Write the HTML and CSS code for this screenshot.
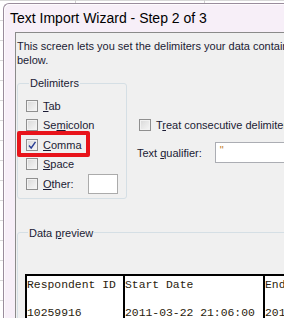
FILE: index.html
```html
<!DOCTYPE html>
<html lang="en">
<head>
  <meta charset="UTF-8" />
  <title>Text Import Wizard - Step 2 of 3</title>
  <link rel="stylesheet" href="styles.css">
</head>
<body>
  <div class="window">
    <div class="titlebar">Text Import Wizard - Step 2 of 3</div>
    <div class="frame">
      <div class="client">
        <p class="intro">This screen lets you set the delimiters your data contains. You can see how your text is affected in the preview<br>below.</p>

        <div class="options">
          <fieldset class="delims">
            <legend>Delimiters</legend>
            <label class="check"><span class="box"></span><span><u>T</u>ab</span></label>
            <label class="check"><span class="box"></span><span>Se<u>m</u>icolon</span></label>
            <label class="check highlight">
              <span class="box"><svg viewBox="0 0 10 10" width="10" height="10"><path d="M2 5.5 L4.2 8 L8.5 1.8" fill="none" stroke="#2b3f95" stroke-width="1.4"/></svg></span>
              <span><u>C</u>omma</span>
            </label>
            <label class="check"><span class="box"></span><span><u>S</u>pace</span></label>
            <label class="check other-row"><span class="box"></span><span><u>O</u>ther:</span><span class="other"></span></label>
          </fieldset>

          <div class="side">
            <label class="check"><span class="box"></span><span>T<u>r</u>eat consecutive delimiters as one</span></label>
            <div class="qualifier">
              <span>Text <u>q</u>ualifier:</span>
              <span class="combo">"</span>
            </div>
          </div>
        </div>

        <fieldset class="preview">
          <legend>Data <u>p</u>review</legend>
          <div class="grid">
            <div class="col c1"><div>Respondent ID</div><div>10259916</div></div>
            <div class="col c2"><div>Start Date</div><div>2011-03-22 21:06:00</div></div>
            <div class="col c3"><div>End Date</div><div>2011-03-22</div></div>
          </div>
        </fieldset>
      </div>
    </div>
  </div>
</body>
</html>
```

FILE: styles.css
```css
body {
  margin: 0;
  width: 284px;
  height: 318px;
  overflow: hidden;
  background-color: #fff;
  background-image:
    linear-gradient(to right, #d0d0d0 1px, transparent 1px),
    linear-gradient(to bottom, #d8d8d8 1px, transparent 1px);
  background-size: 129px 20px;
  background-position: 75px 0;
  font-family: "Liberation Sans", Arial, sans-serif;
  font-size: 11px;
  color: #1b1b34;
}
.window {
  margin: 3px 0 0 3px;
  height: 340px;
  border: 1px solid #9a8c9c;
  border-right: none;
  border-radius: 6px 0 0 0;
  background: #f7eff8;
  box-shadow: inset 1px 1px 0 #fdfbfd;
}
.titlebar {
  height: 28px;
  padding-left: 6px;
  line-height: 28px;
  font-size: 14px;
  color: #000;
}
.frame {
  padding-left: 11px;
}
.client {
  height: 320px;
  background: #f0f0f0;
  border-top: 1px solid #8a8a8a;
  border-left: 1px solid #8a8a8a;
  padding: 6px 0 0 1px;
  overflow: hidden;
}
.intro {
  margin: 0;
  line-height: 14px;
  white-space: nowrap;
}
.options {
  display: flex;
  margin-top: 9px;
}
fieldset {
  margin: 0;
  border: 1px solid #d5dfe5;
  border-radius: 3px;
  padding: 0;
}
legend {
  padding: 0 1px;
  margin-left: 3px;
  line-height: 14px;
}
.delims {
  box-sizing: border-box;
  width: 110px;
  flex: none;
  padding: 9px 0 4px 8px;
  display: flex;
  flex-direction: column;
  gap: 6.5px;
}
.check {
  display: flex;
  align-items: center;
  gap: 5px;
  height: 13px;
  white-space: nowrap;
}
.box {
  box-sizing: border-box;
  width: 12px;
  height: 12px;
  border: 1px solid #8f8f8f;
  background: linear-gradient(135deg, #d8d8d8, #f7f7f7);
  box-shadow: inset 0 0 0 1px #f2f2f2;
  flex: none;
}
.box svg {
  display: block;
}
.highlight {
  position: relative;
}
.highlight::after {
  content: "";
  position: absolute;
  left: -9px;
  top: -7px;
  width: 65px;
  height: 18px;
  border: 4px solid #e8141b;
  border-radius: 2px;
}
.other-row {
  height: 20px;
  margin-top: -3.5px;
}
.other {
  box-sizing: border-box;
  width: 30px;
  height: 20px;
  border: 1px solid #ababab;
  background: #fff;
  margin-left: 9px;
}
.side {
  margin-left: 12px;
  padding-top: 42px;
}
.qualifier {
  display: flex;
  align-items: center;
  margin-top: 11px;
  margin-left: -2px;
}
.combo {
  box-sizing: border-box;
  margin-left: 13px;
  width: 90px;
  height: 21px;
  border: 1px solid #abadb3;
  background: #fff;
  padding: 1px 0 0 4px;
  line-height: 12px;
  color: #c07d2b;
}
.preview {
  margin-top: 27px;
  width: 320px;
  height: 100px;
  padding: 34px 0 0 7px;
}
.grid {
  display: flex;
  background: #fff;
  border-top: 2px solid #000;
  border-left: 2px solid #000;
  font-family: "Liberation Mono", "Courier New", monospace;
  font-size: 11.4px;
  line-height: 14px;
  color: #2b1d0e;
  height: 60px;
}
.col {
  box-sizing: border-box;
  border-right: 2px solid #000;
  display: flex;
  flex-direction: column;
  gap: 14px;
  padding-top: 2px;
  white-space: nowrap;
}
.c1 { width: 98px; }
.c2 { width: 140px; }
.c3 { width: 100px; }
```
